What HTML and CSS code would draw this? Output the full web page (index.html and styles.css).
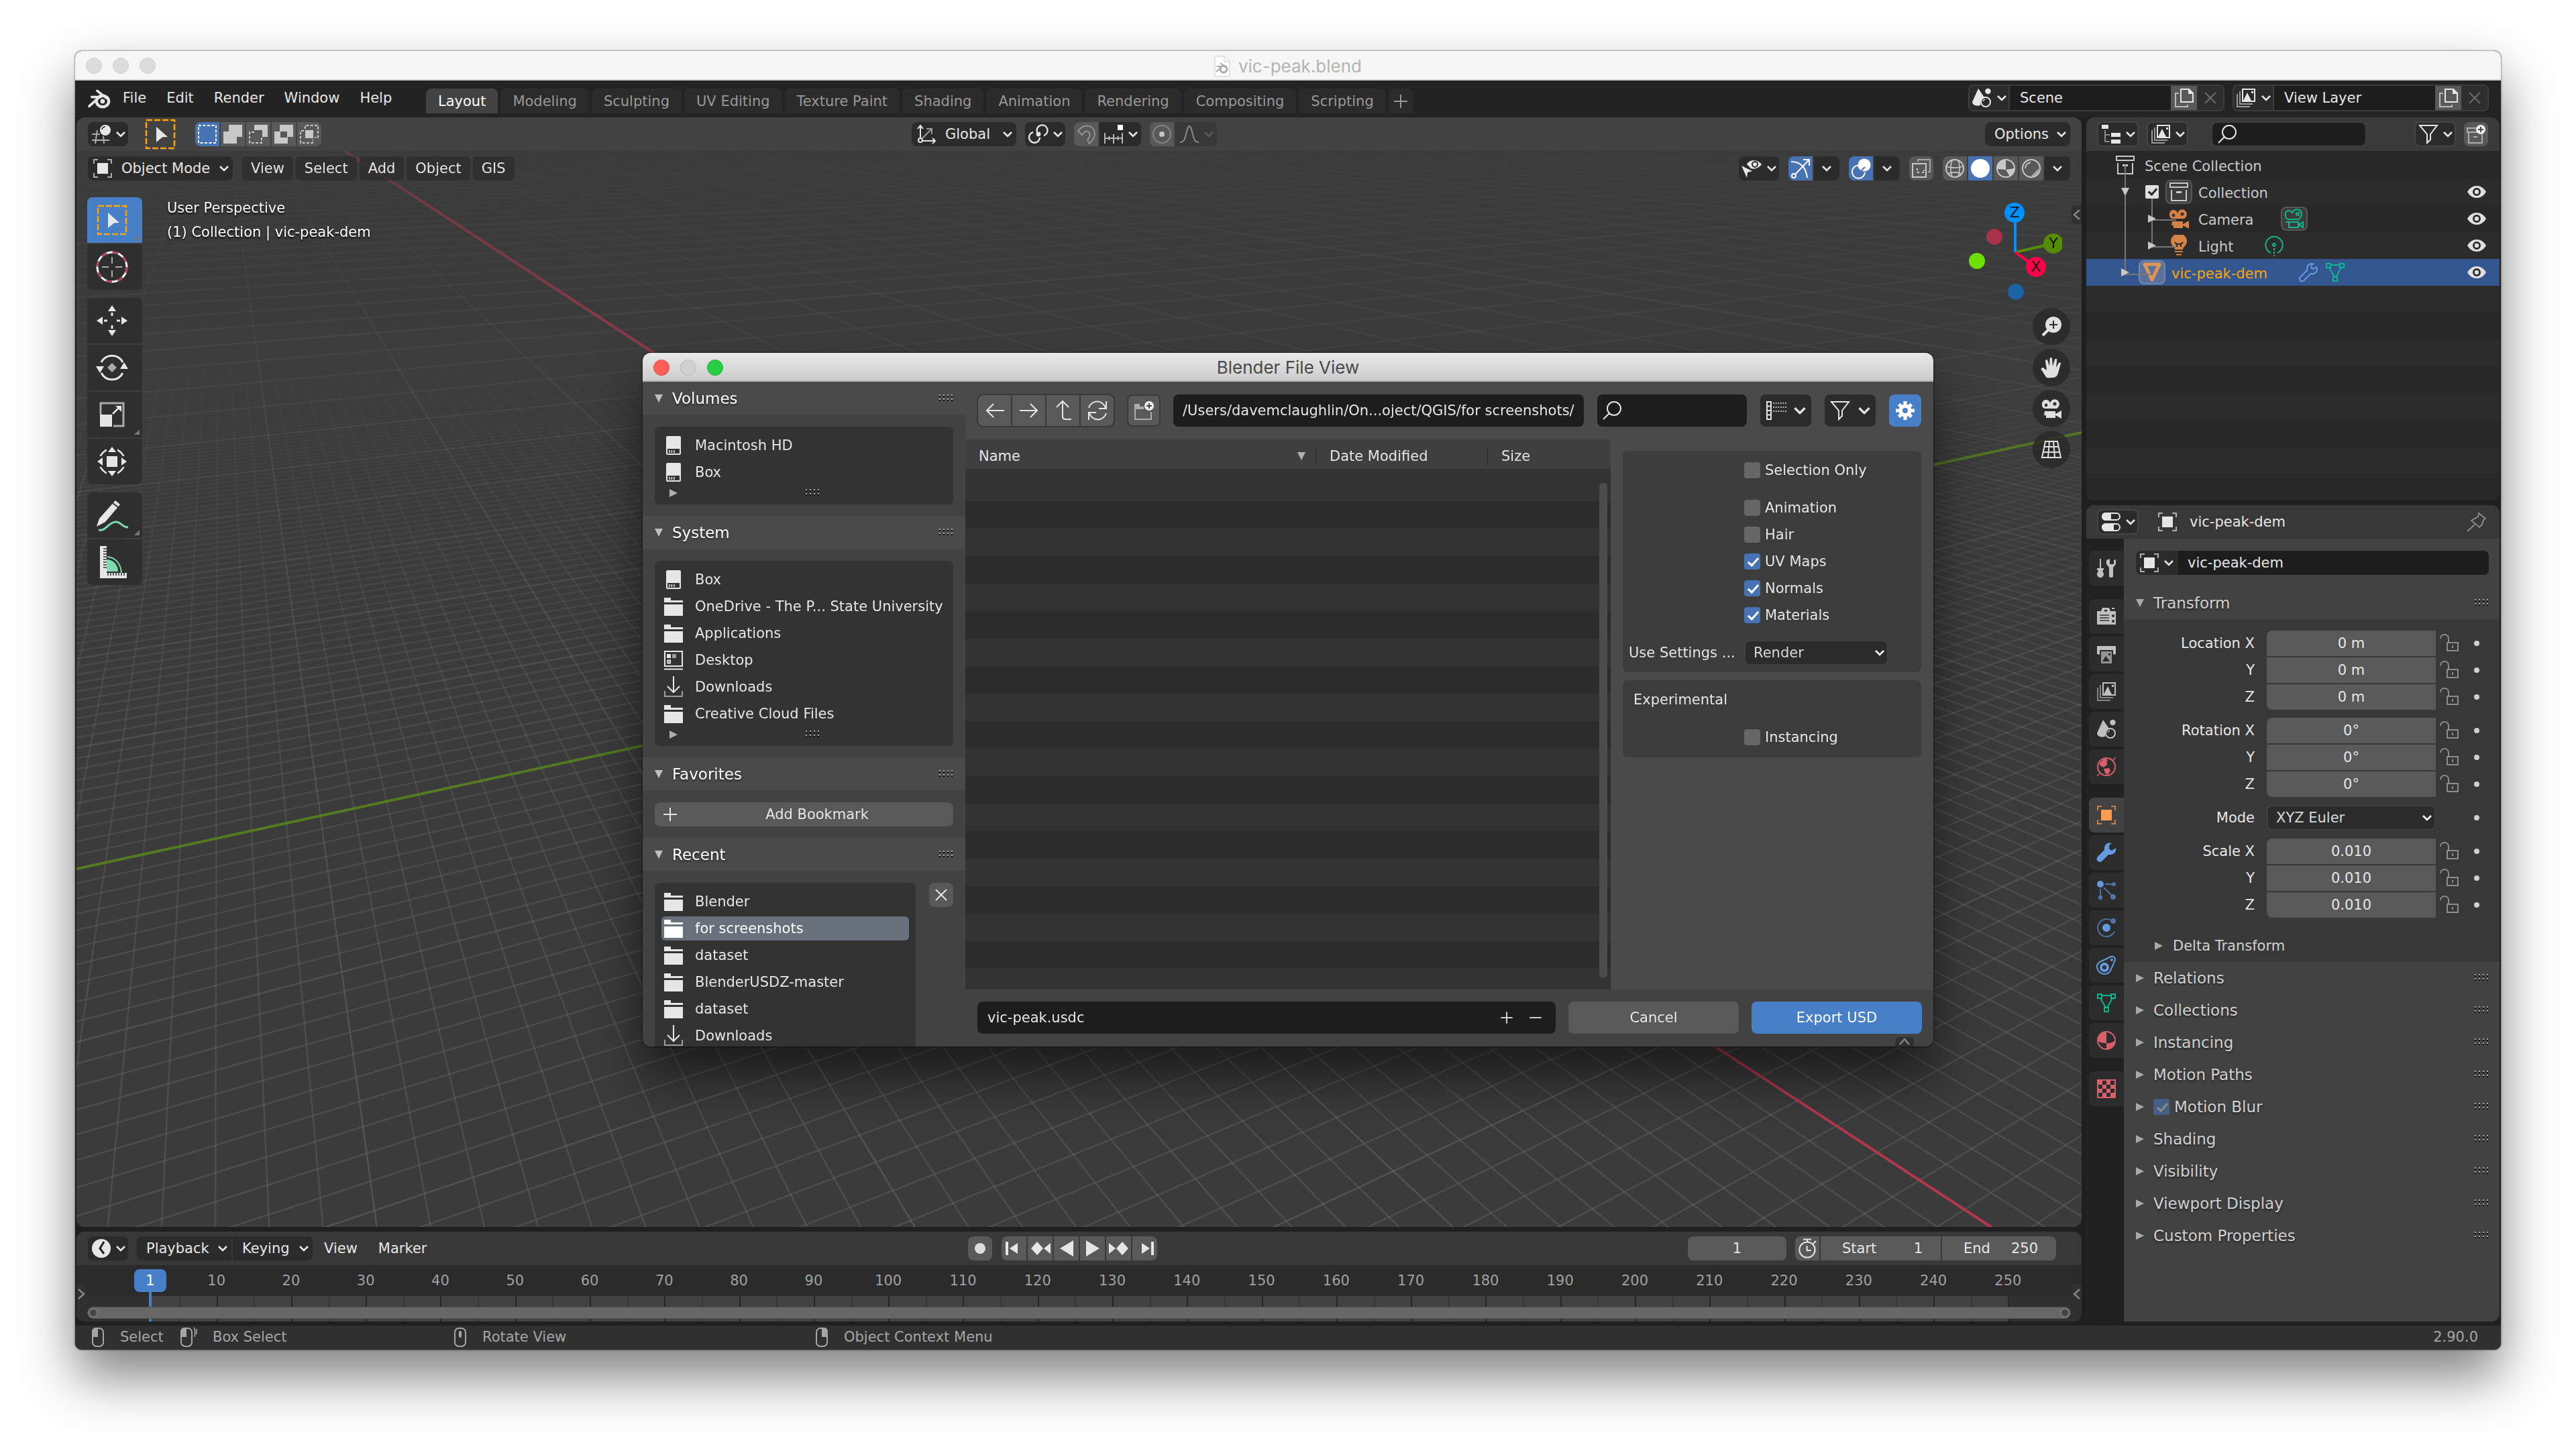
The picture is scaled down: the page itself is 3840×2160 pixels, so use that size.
FILE: index.html
```html
<!DOCTYPE html>
<html lang="en">
<head>
<meta charset="utf-8">
<title>vic-peak.blend</title>
<link rel="stylesheet" href="styles.css">
</head>
<body>
<svg class="defs" aria-hidden="true">
  <symbol id="down" viewBox="0 0 16 16"><path d="M2 5l6 6 6-6" fill="none" stroke="currentColor" stroke-width="2.6"/></symbol>
  <symbol id="left" viewBox="0 0 16 16"><path d="M12 1L4 8l8 7" fill="none" stroke="currentColor" stroke-width="2.4"/></symbol>
  <symbol id="tri-r" viewBox="0 0 16 16"><path d="M2 2l12 6-12 6z" fill="currentColor"/></symbol>
  <symbol id="tri-d" viewBox="0 0 16 16"><path d="M2 2h12L8 14z" fill="currentColor"/></symbol>
  <symbol id="grip" viewBox="0 0 22 12"><path d="M0 1h22M0 7h22" stroke="#000" stroke-width="2" stroke-dasharray="2 4" transform="translate(0 2)"/><path d="M0 1h22M0 7h22" stroke="#aaa" stroke-width="2" stroke-dasharray="2 4"/></symbol>
  <symbol id="plus" viewBox="0 0 16 16"><path d="M8 3v10M3 8h10" stroke="currentColor" fill="none"/></symbol>
  <symbol id="minus" viewBox="0 0 16 16"><path d="M3 8h10" stroke="currentColor"/></symbol>
  <symbol id="x" viewBox="0 0 16 16"><path d="M4 4l8 8M12 4l-8 8" stroke="currentColor" fill="none"/></symbol>
  <symbol id="blender" viewBox="0 0 16 16"><g fill="none" stroke="currentColor" stroke-linecap="round"><ellipse cx="10.2" cy="9.3" rx="4.1" ry="3.7" stroke-width="1.9"/><path d="M1.3 12.6L8.2 6.4M3 6.5h6M6.6 2.4l6.4 5" stroke-width="1.6"/></g><circle cx="10.2" cy="9.3" r="1.5" fill="currentColor"/></symbol>
  <symbol id="view3d" viewBox="0 0 16 16"><g fill="none" stroke="currentColor"><path d="M1 8h6M1 12.5h13M5 5L3.5 15M9.5 9.5L10 15" opacity=".7"/></g><circle cx="11" cy="5" r="4" fill="currentColor"/><path d="M8.5 4.500a2.500 2.500 0 0 1 2.500-2" fill="none" stroke="#2b2b2b" stroke-width=".8"/></symbol>
  <symbol id="tweak" viewBox="0 0 46 46"><rect x="2" y="2" width="42" height="42" fill="none" stroke="#ffa500" stroke-width="2.500" stroke-dasharray="9 3"/><path d="M17 12l17 15-8 .5L17 35z" fill="#e6e6e6"/></symbol>
  <symbol id="selset" viewBox="0 0 16 16"><rect x="1.500" y="1.500" width="13" height="13" fill="none" stroke="#fff" stroke-dasharray="2 1.250"/></symbol>
  <symbol id="seladd" viewBox="0 0 16 16"><path d="M5 1h10v9h-4v5H1V6h4z" fill="#c8c8c8"/></symbol>
  <symbol id="selsub" viewBox="0 0 16 16"><path d="M5 1h10v9h-4V5H5z" fill="#c8c8c8"/><path d="M5 6.500H1.500v8H10.500V10" fill="none" stroke="#c8c8c8" stroke-dasharray="2 1.200"/></symbol>
  <symbol id="selxor" viewBox="0 0 16 16"><path d="M5 1h10v9h-4v5H1V6h4zM5.500 6v4.500h5V6z" fill="#c8c8c8" fill-rule="evenodd"/></symbol>
  <symbol id="selint" viewBox="0 0 16 16"><path d="M5 5h6v6H5z" fill="#c8c8c8"/><path d="M5 4V1.500h9.500v9H12M4 5.500H1.500v9h9V12" fill="none" stroke="#c8c8c8" stroke-dasharray="2 1.200"/></symbol>
  <symbol id="orient" viewBox="0 0 16 16"><g fill="none" stroke="currentColor"><path d="M3.500 11V1.500M1.500 4l2-2.500L5.500 4M5 13h9.500M12.500 11l2 2-2 2"/><circle cx="3.500" cy="12.500" r="1.500"/><path d="M5 11l6.500-6.500M8 4h4v4" opacity=".6"/></g></symbol>
  <symbol id="pivot" viewBox="0 0 16 16"><g fill="none" stroke="currentColor" stroke-width="1.200"><path d="M7 6.500A4 4 0 1 1 12 9"/><path d="M4 6.500a4 4 0 1 0 5 4"/></g><circle cx="8" cy="8" r="1.700" fill="currentColor"/></symbol>
  <symbol id="magnet" viewBox="0 0 16 16"><path d="M2 6c3-6 12-6 12.500 2 0 2-2 5-4 7l-1.500-2.500C11 10 11.500 8 10 6.500 8.500 5 7 6 5 8.500z" fill="none" stroke="currentColor"/></symbol>
  <symbol id="snapinc" viewBox="0 0 16 16"><path d="M1.500 7v8M14.500 7v8M8 8v7M1 11h14M4.700 9.500v3M11.300 9.500v3" stroke="currentColor" opacity=".75"/><path d="M11 1h4v4h-4z" fill="#fff"/></symbol>
  <symbol id="prop" viewBox="0 0 16 16"><circle cx="8" cy="8" r="6.500" fill="none" stroke="currentColor" opacity=".4"/><circle cx="8" cy="8" r="2" fill="currentColor"/></symbol>
  <symbol id="falloff" viewBox="0 0 16 16"><path d="M1 14c3 0 3.500-2 4.500-6S7 2 8 2s1.500 2 2.500 6 1.500 6 4.500 6" fill="none" stroke="currentColor"/></symbol>
  <symbol id="object" viewBox="0 0 16 16"><path d="M4 4h8v8H4z" fill="currentColor"/><path d="M1.500 4.500v-3h3M11.500 1.500h3v3M14.500 11.500v3h-3M4.500 14.500h-3v-3" fill="none" stroke="currentColor" opacity=".7"/></symbol>
  <symbol id="vis" viewBox="0 0 16 16"><path d="M4 5c2-4 8-4 11 0-3 4-8 4-9 2z" fill="currentColor"/><circle cx="10" cy="5" r="2" fill="none" stroke="#2b2b2b"/><path d="M0 6l8 4-3.500 1L4 15z" fill="currentColor"/></symbol>
  <symbol id="gizmo" viewBox="0 0 16 16"><g fill="none" stroke="currentColor"><path d="M1 3c7 0 11 4 12 12M4 12.500L14 2M10 1.500h4.500V6"/><circle cx="3" cy="13.500" r="1.500"/></g></symbol>
  <symbol id="overlay" viewBox="0 0 16 16"><circle cx="10.500" cy="5.500" r="4.800" fill="currentColor"/><path d="M6 5.800a4.800 4.800 0 1 0 5 5.200" fill="none" stroke="currentColor"/><path d="M7 11l4-4" stroke="#4772b3"/></symbol>
  <symbol id="xray" viewBox="0 0 16 16"><g fill="none" stroke="currentColor"><path d="M1.500 4.500h10v10h-10z"/><path d="M5.500 3V1.500h9v9H13" opacity=".7"/><path d="M5 11h2M8.500 11H10V9M5 8v3" stroke-dasharray="1.500 1"/></g></symbol>
  <symbol id="wire" viewBox="0 0 16 16"><g fill="none" stroke="currentColor"><circle cx="8" cy="8" r="6.500"/><path d="M1.500 6.500c4 1.300 9 1.300 13 0M3 12c3-1.300 7-1.300 10 0M6 2c-1.500 4-1.500 8 0 12M10.500 2c1.500 4 1.500 8 0 12" stroke-width=".8"/></g></symbol>
  <symbol id="solid" viewBox="0 0 16 16"><circle cx="8" cy="8" r="7" fill="#fff"/></symbol>
  <symbol id="matprev" viewBox="0 0 16 16"><circle cx="8" cy="8" r="6.500" fill="none" stroke="currentColor"/><path d="M8 1.500V9L1.800 8.500A6.500 6.500 0 0 1 8 1.500zM8 9l6-1v3l-3 3z" fill="currentColor"/></symbol>
  <symbol id="rendered" viewBox="0 0 16 16"><circle cx="8" cy="8" r="6.500" fill="none" stroke="currentColor"/><path d="M3.500 8a5 5 0 0 1 4-4.500" fill="none" stroke="currentColor"/><path d="M8 13.500L13.500 8v4l-3 2.500z" fill="currentColor" opacity=".7"/></symbol>
  <symbol id="scene" viewBox="0 0 16 16"><path d="M5.500 1L1 11c0 2 3 3.500 6 2.500 0-3 1-5 3-6z" fill="currentColor"/><circle cx="12.700" cy="3" r="2.100" fill="currentColor"/><circle cx="11" cy="11" r="3.500" fill="none" stroke="currentColor"/><path d="M9 10.500a2 2 0 0 1 1.500-1.300" fill="none" stroke="currentColor" stroke-width=".7"/></symbol>
  <symbol id="copy" viewBox="0 0 16 16"><g fill="none" stroke="currentColor"><path d="M5.500 1.500h6L14.500 4.500V11h-9z"/><path d="M4 4.500H1.500v10h9V13" opacity=".7"/></g><path d="M11 1l4 4h-4z" fill="currentColor"/></symbol>
  <symbol id="layers" viewBox="0 0 16 16"><g fill="none" stroke="currentColor"><path d="M5.500 1.500h9v9h-9z"/><path d="M3.500 3v9.500H13M1.500 5v9.500H11" opacity=".6"/></g><path d="M6 10l3-6 3 6zM12 3h1.500v1.500H12z" fill="currentColor"/></symbol>
  <symbol id="outliner" viewBox="0 0 16 16"><path d="M1 1h5v3H1zM8 7h7v3H8zM8 12h7v3H8z" fill="currentColor"/><path d="M3.500 5v8.500H7M3.500 8.500H7" fill="none" stroke="currentColor" opacity=".5"/></symbol>
  <symbol id="search" viewBox="0 0 16 16"><g fill="none" stroke="currentColor"><circle cx="9.500" cy="6.500" r="5"/><path d="M6 10l-4.500 4.500"/></g></symbol>
  <symbol id="filter" viewBox="0 0 16 16"><path d="M1.500 1.500h13L9.500 8v4L7 14.500V8z" fill="none" stroke="currentColor"/></symbol>
  <symbol id="newcol" viewBox="0 0 16 16"><g fill="none" stroke="currentColor" opacity=".6"><path d="M9 3.500H1.500v3H11M2.500 7v7.500h10V8M6 10h3"/></g><circle cx="11.500" cy="4.500" r="3.500" fill="#f0f0f0"/><path d="M11.500 2.500v4M9.500 4.500h4" stroke="#444"/></symbol>
  <symbol id="archive" viewBox="0 0 16 16"><g fill="none" stroke="currentColor"><path d="M1.500 1.500h13v3h-13zM2.500 6.500v8h11v-8"/></g><path d="M6 7.500h4v1.500H6z" fill="currentColor"/></symbol>
  <symbol id="eye" viewBox="0 0 16 16"><path d="M1 8c3.500-6 10.500-6 14 0-3.500 6-10.500 6-14 0z" fill="currentColor"/><circle cx="8" cy="8" r="2.300" fill="none" stroke="#282828" stroke-width="1.400"/></symbol>
  <symbol id="camera" viewBox="0 0 16 16"><path d="M1 5a3 3 0 0 1 6-1 3.500 3.500 0 1 1 6 3l-1 1H3a3 3 0 0 1-2-3zM3 10h8v5H4v-2H2.500zM11 12l4.500-2.500v6L11 13z" fill="currentColor"/><g fill="#333"><circle cx="4" cy="5.500" r="1.200"/><circle cx="10.500" cy="4.500" r="1.300"/></g></symbol>
  <symbol id="camera-o" viewBox="0 0 16 16"><g fill="none" stroke="currentColor"><path d="M1.500 5a2.500 2.500 0 0 1 5-1 3.500 3.500 0 1 1 6 3l-1 1.500H3.500a3 3 0 0 1-2-3.500zM4 10.500h7v4H4zM11.500 12.500l3-2v4zM1.500 10.500H4"/><circle cx="10.500" cy="4.500" r="1" /></g></symbol>
  <symbol id="light" viewBox="0 0 16 16"><path d="M5 11c0-2-3-3-3-6a6 6 0 0 1 12 0c0 3-3 4-3 6z" fill="currentColor"/><path d="M5 12.500h6M6 14.700h4" stroke="currentColor"/><path d="M5 5.500c1 2 5 2 6 0M6.500 9V7M9.500 9V7" fill="none" stroke="#2b2b2b"/></symbol>
  <symbol id="light-o" viewBox="0 0 16 16"><g fill="none" stroke="currentColor"><path d="M5.500 13.500a6.300 6.300 0 1 1 5 0" /><circle cx="8" cy="7.500" r="1"/><path d="M8 10v1.500M8 12.500V14M8 15v1"/></g></symbol>
  <symbol id="tri-mesh" viewBox="0 0 16 16"><path d="M2.500 2h11L8 13.500z" fill="none" stroke="#e0935a" stroke-width="2.600" stroke-linejoin="round"/></symbol>
  <symbol id="wrench" viewBox="0 0 16 16"><path d="M13.700 4.200l-2.200 1.300-1.300-.8.200-2.300C11 2 11.300 1.800 11.600 1.700 9.500 1 7 2.500 7 5c0 .5.100 1 .2 1.400L2 11.500c-.8.800-.8 2 0 2.700s2 .7 2.700-.1L9.800 8.900c2.700.9 5-1.200 4.800-4z" fill="none" stroke="currentColor"/></symbol>
  <symbol id="wrench-f" viewBox="0 0 16 16"><path d="M15 4.500l-3 2-2-1.300.2-3L12 1C9 0 6 2 6.500 6L1.500 11c-1 1.200-.8 2.500 0 3.300s2.200 1 3.300-.1L9.500 9.500C13 10 15.500 8 15 4.500z" fill="currentColor"/></symbol>
  <symbol id="mesh" viewBox="0 0 16 16"><g fill="none" stroke="currentColor"><path d="M1.500 1.500h3v3h-3zM11.500 1.500h3v3h-3zM6.500 11.500h3v3h-3zM4.500 2.500h7M3.500 4.500l4 7M12.500 4.500l-4 7"/></g></symbol>
  <symbol id="props" viewBox="0 0 16 16"><g fill="none" stroke="currentColor"><rect x="1.500" y="1.500" width="13" height="5" rx="2.500"/><rect x="1.500" y="9.500" width="13" height="5" rx="2.500"/></g><path d="M4 1h4v6H4a3 3 0 0 1 0-6zM4 9h6v6H4a3 3 0 0 1 0-6z" fill="currentColor"/></symbol>
  <symbol id="pin" viewBox="0 0 16 16"><path d="M9.500 1.500l5 4-1.500 1-1 3.500-2 2L4 7l5-3zM6.500 10L1 15" fill="none" stroke="currentColor"/></symbol>
  <symbol id="tool" viewBox="0 0 16 16"><path d="M3.500 1v8" stroke="currentColor"/><path d="M1 8h5v1L5 10l1 2c0 4-5 4-5 0l1-2-1-1z" fill="currentColor"/><path d="M8 2v3l2 2.500V14c0 1.300 3 1.300 3 0V7.500L15 5V1.500l-1.500.5v3h-3V1z" fill="currentColor"/></symbol>
  <symbol id="render" viewBox="0 0 16 16"><path d="M1 4h3l1-2.500h5L11 4h4v10H1zM12 1.500h2v1h-2z" fill="currentColor"/><path d="M3 7h7M3 9h7M3 11h7" stroke="#555" stroke-width=".9"/><circle cx="13" cy="7.500" r="1" fill="#2b2b2b"/><circle cx="13" cy="11.500" r="1" fill="#2b2b2b"/><path d="M6.500 3h2v1.300h-2z" fill="#2b2b2b"/></symbol>
  <symbol id="output" viewBox="0 0 16 16"><path d="M1 2h14v6l-2 .5V5H3v3.500L1 8z" fill="currentColor"/><path d="M4 6h8v9H4z" fill="currentColor" opacity=".7"/><path d="M5 13.500l2.500-4 3 4zM9.500 7.500H11V9H9.500z" fill="#2b2b2b"/></symbol>
  <symbol id="world" viewBox="0 0 16 16"><g fill="none" stroke="currentColor"><circle cx="8" cy="8" r="6.500"/><path d="M12.500 3.500L15 1M3.500 12.500L1 15" opacity=".7"/></g><path d="M3 5l4-3.500 2 1.500-1 2 1 1-3 2.500L3 7zM6 9.500l4-.5 1 2-2 3-2-1.500z" fill="currentColor"/></symbol>
  <symbol id="particles" viewBox="0 0 16 16"><circle cx="3.500" cy="3.500" r="2.500" fill="currentColor"/><g opacity=".65"><circle cx="13.500" cy="3.500" r="1.500" fill="currentColor"/><circle cx="13" cy="13" r="2" fill="currentColor"/><circle cx="3.500" cy="13.500" r="1.600" fill="currentColor"/><path d="M7 3.500h5M3.500 7v5M6 6l6 6" stroke="currentColor"/></g></symbol>
  <symbol id="physics" viewBox="0 0 16 16"><circle cx="8" cy="8" r="3" fill="currentColor"/><g opacity=".65"><path d="M11 2.200a6.500 6.500 0 1 0 3 8.500" fill="none" stroke="currentColor"/><circle cx="13" cy="3" r="2" fill="currentColor"/></g></symbol>
  <symbol id="constraint" viewBox="0 0 16 16"><g fill="none" stroke="currentColor"><path d="M3 5.500L11.500 1.500c2-.5 3.500 1 2.800 3L11 12c-2 3.500-7 3-9 0s-1-5 1-6.500z"/><circle cx="6.500" cy="9.500" r="2.500" stroke-width="2"/></g><circle cx="12" cy="4" r="1" fill="currentColor"/></symbol>
  <symbol id="material" viewBox="0 0 16 16"><circle cx="8" cy="8" r="6.500" fill="none" stroke="currentColor"/><path d="M8 1.500V10c-3 0-5-.5-6.500-2A6.500 6.500 0 0 1 8 1.500zM8 10c3 0 5-.5 6.500-2A6.500 6.500 0 0 1 8 14.500z" fill="currentColor"/></symbol>
  <symbol id="texture" viewBox="0 0 16 16"><path d="M1.500 1.500h13v13h-13z" fill="none" stroke="currentColor"/><path d="M2 2h3v3H2zM8 2h3v3H8zM5 5h3v3H5zM11 5h3v3h-3zM2 8h3v3H2zM8 8h3v3H8zM5 11h3v3H5zM11 11h3v3h-3z" fill="currentColor"/></symbol>
  <symbol id="lock" viewBox="0 0 16 16"><g fill="none" stroke="currentColor"><path d="M6.500 7.500h8v6h-8zM7.500 7V4.500c0-4-6-4-6 0"/></g><path d="M10 9.500h1v2h-1z" fill="currentColor"/></symbol>
  <symbol id="drive" viewBox="0 0 16 16"><path d="M3.500 1h9a1 1 0 0 1 1 1v12a1 1 0 0 1-1 1h-9a1 1 0 0 1-1-1V2a1 1 0 0 1 1-1z" fill="currentColor"/><path d="M3.500 10.500h9v3.500h-9z" fill="#333"/><path d="M5 11.500v2M6.700 11.500v2M8.500 11.500v2" stroke="currentColor" stroke-width=".8"/></symbol>
  <symbol id="folder" viewBox="0 0 16 16"><path d="M1 1.500h5v2h9V5H1zM1 6.500h14v8.500H1z" fill="currentColor"/></symbol>
  <symbol id="desktop" viewBox="0 0 16 16"><g fill="none" stroke="currentColor"><path d="M1.500 1.500h13v11h-13zM1 14.800h14M3.700 8.200h1.800v2H3.700z"/></g><path d="M3 3.500h3v3H3z" fill="currentColor"/><path d="M7 3.500h3v3H7z" fill="currentColor" opacity=".6"/></symbol>
  <symbol id="download" viewBox="0 0 16 16"><path d="M8 0v12M3.500 7.500L8 12l4.500-4.500" fill="none" stroke="currentColor"/><path d="M1.500 11v4h13v-4" fill="none" stroke="currentColor" opacity=".6"/></symbol>
  <symbol id="back" viewBox="0 0 16 16"><path d="M15 8H2M7 3L2 8l5 5" fill="none" stroke="currentColor"/></symbol>
  <symbol id="fwd" viewBox="0 0 16 16"><path d="M1 8h13M9 3l5 5-5 5" fill="none" stroke="currentColor"/></symbol>
  <symbol id="up" viewBox="0 0 16 16"><path d="M7.500 1v11c0 2 .5 2.500 2.500 2.500h4M3 5.500L7.500 1 12 5.500" fill="none" stroke="currentColor"/></symbol>
  <symbol id="refresh" viewBox="0 0 16 16"><path d="M1.500 6A6.500 6.500 0 0 1 14 6M14.500 1v5.500H9M14.500 10A6.500 6.500 0 0 1 2 10M1.500 15V9.500H7" fill="none" stroke="currentColor"/></symbol>
  <symbol id="newfolder" viewBox="0 0 16 16"><path d="M1 3h4v2h3v2H1z" fill="currentColor" opacity=".6"/><path d="M1.500 7v7.500h12V9" fill="none" stroke="currentColor" opacity=".6"/><circle cx="12" cy="4.500" r="3.500" fill="#f0f0f0"/><path d="M12 2.500v4M10 4.500h4" stroke="#444"/></symbol>
  <symbol id="list" viewBox="0 0 16 16"><path d="M1.500 1.500h3v13h-3zM1.500 4.700h3M1.500 8h3M1.500 11.300h3" fill="none" stroke="currentColor"/><path d="M6 2.500h10M6 5.500h10M6 8.500h10" stroke="currentColor" stroke-width=".8" stroke-dasharray="1 .8"/></symbol>
  <symbol id="gear" viewBox="0 0 16 16"><g stroke="#fff" stroke-width="2.600"><path d="M8 1v14M1 8h14M3.300 3.300l9.400 9.400M12.700 3.300l-9.400 9.400"/></g><circle cx="8" cy="8" r="4.800" fill="#fff"/><circle cx="8" cy="8" r="2" fill="#4780c8"/></symbol>
  <symbol id="clock" viewBox="0 0 16 16"><circle cx="8" cy="8" r="7" fill="currentColor"/><path d="M10 3L7 8l3 4" fill="none" stroke="#222" stroke-width="1.500"/></symbol>
  <symbol id="stopwatch" viewBox="0 0 16 16"><g fill="none" stroke="currentColor"><circle cx="8" cy="9" r="5.800"/><path d="M8 3V1M5 1.200h6M12.500 4.500l2-2M7.800 6v3.500h3"/></g></symbol>
  <symbol id="mouse-l" viewBox="0 0 16 16"><rect x="4" y="1.500" width="8" height="13.500" rx="3" fill="none" stroke="currentColor"/><path d="M8 1H7a3 3 0 0 0-3.500 3v4H8z" fill="currentColor"/></symbol>
  <symbol id="mouse-drag" viewBox="0 0 16 16"><rect x="1" y="1.500" width="8" height="13.500" rx="3" fill="none" stroke="currentColor"/><path d="M5 1H4a3 3 0 0 0-3.500 3v4H5z" fill="currentColor"/><path d="M10.500 1c1 1 1 5 .500 7M12.500 2v4" fill="none" stroke="currentColor" stroke-width=".8"/></symbol>
  <symbol id="mouse-m" viewBox="0 0 16 16"><rect x="4" y="1.500" width="8" height="13.500" rx="3" fill="none" stroke="currentColor"/><rect x="7" y="3.500" width="2" height="5" rx="1" fill="currentColor"/></symbol>
  <symbol id="mouse-r" viewBox="0 0 16 16"><rect x="4" y="1.500" width="8" height="13.500" rx="3" fill="none" stroke="currentColor"/><path d="M8 1h1a3 3 0 0 1 3.500 3v4H8z" fill="currentColor"/></symbol>
  <symbol id="k-start" viewBox="0 0 16 16"><path d="M1.500 3h2v10h-2zM10.500 4v8L4.500 8z" fill="currentColor"/></symbol>
  <symbol id="k-prev" viewBox="0 0 16 16"><path d="M1 8l4.500-5L10 8l-4.500 5zM15.500 4v8l-5-4z" fill="currentColor"/></symbol>
  <symbol id="k-rev" viewBox="0 0 16 16"><path d="M13 2v12L3 8z" fill="currentColor"/></symbol>
  <symbol id="k-play" viewBox="0 0 16 16"><path d="M3 2v12l10-6z" fill="currentColor"/></symbol>
  <symbol id="k-next" viewBox="0 0 16 16"><path d="M6 8l4.500-5L15 8l-4.500 5zM.500 4v8l5-4z" fill="currentColor"/></symbol>
  <symbol id="k-end" viewBox="0 0 16 16"><path d="M12.500 3h2v10h-2zM5.500 4v8l6-4z" fill="currentColor"/></symbol>
  <symbol id="zoom" viewBox="0 0 16 16"><circle cx="9.500" cy="6.500" r="6" fill="currentColor"/><path d="M6 10l-4.500 4.500" stroke="currentColor" stroke-width="2"/><path d="M9.500 3.500v6M6.500 6.500h6" stroke="#2b2b2b"/></symbol>
  <symbol id="hand" viewBox="0 0 16 16"><path d="M4 15L.5 9.500C0 8 1.500 7.500 2.500 8.500L4.500 10 3.500 3c0-1.300 1.500-1.500 1.800 0L6.500 7l.3-5.500c0-1.300 1.700-1.300 1.700 0L9 7l1.500-5c.5-1 1.800-.8 1.600.5L11.500 8l2-3.500c.7-.8 1.700-.3 1.400.7L13 12c-.7 2.500-2 3.500-4.500 3.500S5 16 4 15z" fill="currentColor"/></symbol>
  <symbol id="persp" viewBox="0 0 16 16"><path d="M3.500 2h9l2.500 12H1zM2.500 6h11M1.700 10h12.600M6.500 2L5.500 14M9.500 2l1 12" fill="none" stroke="currentColor"/></symbol>
  <symbol id="t-cursor" viewBox="0 0 48 48"><circle cx="24" cy="24" r="22" fill="none" stroke="#fff" stroke-width="3"/><circle cx="24" cy="24" r="22" fill="none" stroke="#b04050" stroke-width="3" stroke-dasharray="8.640 8.640"/><path d="M24 9v10M24 29v10M9 24h10M29 24h10" stroke="#aaa" stroke-width="2"/></symbol>
  <symbol id="t-move" viewBox="0 0 48 48"><path d="M24 1l6 9H18zM24 47l6-9H18zM1 24l9-6v12zM47 24l-9-6v12z" fill="#e6e6e6"/><path d="M24 12v5M24 31v5M12 24h5M31 24h5" stroke="#e6e6e6" stroke-width="3"/></symbol>
  <symbol id="t-rotate" viewBox="0 0 48 48"><path d="M8 16a18 18 0 0 1 32 0M40 32a18 18 0 0 1-32 0" fill="none" stroke="#e6e6e6" stroke-width="3"/><path d="M0 22h12l-6 10zM36 26h12l-6-10z" fill="#e6e6e6"/><path d="M24 17l7 7-7 7-7-7z" fill="#aaa"/></symbol>
  <symbol id="t-scale" viewBox="0 0 48 48"><path d="M7 24V7h34v34H26" fill="none" stroke="#aaa" stroke-width="3"/><path d="M6 24h18v18H6z" fill="#e6e6e6"/><path d="M25 23l9-9" stroke="#e6e6e6" stroke-width="2.500"/><path d="M29 11h9v9z" fill="#e6e6e6"/></symbol>
  <symbol id="t-transform" viewBox="0 0 48 48"><circle cx="24" cy="24" r="19" fill="none" stroke="#e6e6e6" stroke-width="2.500"/><path d="M16 0h16v11H16zM16 37h16v11H16zM0 16h11v16H0zM37 16h11v16H37z" fill="#2f2f2f"/><path d="M24 2l6 8H18zM24 46l6-8H18zM2 24l8-6v12zM46 24l-8-6v12zM16 16h16v16H16z" fill="#e6e6e6"/></symbol>
  <symbol id="t-annotate" viewBox="0 0 48 48"><path d="M4 46c12 2 14-12 26-12 8 0 8 8 18 8" fill="none" stroke="#7ddbb0" stroke-width="3"/><path d="M29 2l7 6L14 34 1 41l4-12z" fill="#e6e6e6"/><path d="M25 6l8 6" stroke="#2f2f2f" stroke-width="2"/></symbol>
  <symbol id="t-measure" viewBox="0 0 48 48"><path d="M17 16c12 1 20 10 21 24" fill="none" stroke="#7ddbb0" stroke-width="2"/><path d="M16 20c10 0 17 8 17 18H16z" fill="#7ddbb0"/><path d="M6 0h10v40h30v8H6z" fill="#e6e6e6"/><path d="M11 4h5M11 8h5M11 12h5M11 16h5M11 20h5M11 24h5M11 28h5M11 32h5M18 40v4M22 40v4M26 40v4M30 40v4M34 40v4M38 40v4M42 40v4" stroke="#2f2f2f" stroke-width="1.500"/></symbol>
</svg>

<main class="window">
  <header class="titlebar">
    <span class="lights"><i></i><i></i><i></i></span>
    <h1 class="title"><svg class="doc" viewBox="0 0 24 32"><path d="M1 1h14l8 8v22H1z" fill="#fff" stroke="#ccc"/><path d="M15 1v8h8" fill="none" stroke="#ccc"/><g fill="none" stroke="#aaa" stroke-width="3"><circle cx="14" cy="20" r="5"/><path d="M3 24l8-7M4 16h8M9 11l8 6" stroke-width="2"/></g></svg>vic-peak.blend</h1>
  </header>

  <nav class="topbar">
    <button class="bare logo" aria-label="Blender"><svg class="ic36"><use href="#blender"/></svg></button>
    <div class="menus"><button>File</button><button>Edit</button><button>Render</button><button>Window</button><button>Help</button></div>
    <div class="tabs"><button class="on">Layout</button><button>Modeling</button><button>Sculpting</button><button>UV Editing</button><button>Texture Paint</button><button>Shading</button><button>Animation</button><button>Rendering</button><button>Compositing</button><button>Scripting</button><button class="add" aria-label="Add workspace"><svg class="ic"><use href="#plus"/></svg></button></div>
    <div class="idblock scene">
      <button class="dd" aria-label="Browse scene"><svg class="ic"><use href="#scene"/></svg><svg class="chev"><use href="#down"/></svg></button>
      <input type="text" value="Scene" aria-label="Scene name">
      <button class="lit" aria-label="New scene"><svg class="ic"><use href="#copy"/></svg></button>
      <button class="off" aria-label="Delete scene"><svg class="ic"><use href="#x"/></svg></button>
    </div>
    <div class="idblock layer">
      <button class="dd" aria-label="Browse layer"><svg class="ic"><use href="#layers"/></svg><svg class="chev"><use href="#down"/></svg></button>
      <input type="text" value="View Layer" aria-label="View layer name">
      <button class="lit" aria-label="New layer"><svg class="ic"><use href="#copy"/></svg></button>
      <button class="off" aria-label="Delete layer"><svg class="ic"><use href="#x"/></svg></button>
    </div>
  </nav>

  <div class="workspace">
    <div class="left-col">
      <section class="area view3d">
        <div class="toolhead">
          <div class="side">
            <button class="dark dd" aria-label="Editor type"><svg class="ic"><use href="#view3d"/></svg><svg class="chev"><use href="#down"/></svg></button>
            <button class="bare tweak" aria-label="Active tool"><svg class="ic46"><use href="#tweak"/></svg></button>
            <div class="group"><button class="blue" aria-label="Set"><svg class="ic"><use href="#selset"/></svg></button><button aria-label="Extend"><svg class="ic"><use href="#seladd"/></svg></button><button aria-label="Subtract"><svg class="ic"><use href="#selsub"/></svg></button><button aria-label="Invert"><svg class="ic"><use href="#selxor"/></svg></button><button aria-label="Intersect"><svg class="ic"><use href="#selint"/></svg></button></div>
          </div>
          <div class="mid">
            <button class="dark label wide"><svg class="ic"><use href="#orient"/></svg><span>Global</span><svg class="chev"><use href="#down"/></svg></button>
            <button class="dark dd" aria-label="Pivot"><svg class="ic"><use href="#pivot"/></svg><svg class="chev"><use href="#down"/></svg></button>
            <div class="group"><button class="dim" aria-label="Snap"><svg class="ic"><use href="#magnet"/></svg></button><button class="dark dd" aria-label="Snap to"><svg class="ic"><use href="#snapinc"/></svg><svg class="chev"><use href="#down"/></svg></button></div>
            <div class="group"><button aria-label="Proportional editing"><svg class="ic"><use href="#prop"/></svg></button><button class="faded dd" aria-label="Falloff"><svg class="ic"><use href="#falloff"/></svg><svg class="chev"><use href="#down"/></svg></button></div>
          </div>
          <div class="side end"><button class="dark textdrop options">Options<svg class="chev"><use href="#down"/></svg></button></div>
        </div>
        <div class="viewport">
          <canvas id="floor"></canvas>
          <div class="viewhead">
            <button class="dark label mode"><svg class="ic"><use href="#object"/></svg><span>Object Mode</span><svg class="chev"><use href="#down"/></svg></button>
            <div class="vmenus"><button>View</button><button>Select</button><button>Add</button><button>Object</button><button>GIS</button></div>
            <div class="vright">
              <button class="dark dd" aria-label="Visibility"><svg class="ic"><use href="#vis"/></svg><svg class="chev"><use href="#down"/></svg></button>
              <div class="group"><button class="blue" aria-label="Gizmos"><svg class="ic"><use href="#gizmo"/></svg></button><button class="dark" aria-label="Gizmo options"><svg class="chev"><use href="#down"/></svg></button></div>
              <div class="group"><button class="blue" aria-label="Overlays"><svg class="ic"><use href="#overlay"/></svg></button><button class="dark" aria-label="Overlay options"><svg class="chev"><use href="#down"/></svg></button></div>
              <div class="group"><button aria-label="X-ray"><svg class="ic"><use href="#xray"/></svg></button></div>
              <div class="group"><button aria-label="Wireframe"><svg class="ic"><use href="#wire"/></svg></button><button class="blue" aria-label="Solid"><svg class="ic"><use href="#solid"/></svg></button><button aria-label="Material"><svg class="ic"><use href="#matprev"/></svg></button><button aria-label="Rendered"><svg class="ic"><use href="#rendered"/></svg></button><button class="dark" aria-label="Shading options"><svg class="chev"><use href="#down"/></svg></button></div>
            </div>
          </div>
          <div class="viewbody">
            <div class="tools">
              <div class="toolgroup"><button class="on more" aria-label="Select box"><svg class="ic46"><use href="#tweak"/></svg></button><button aria-label="Cursor"><svg class="ic48"><use href="#t-cursor"/></svg></button></div>
              <div class="toolgroup"><button aria-label="Move"><svg class="ic48"><use href="#t-move"/></svg></button><button aria-label="Rotate"><svg class="ic48"><use href="#t-rotate"/></svg></button><button class="more" aria-label="Scale"><svg class="ic48"><use href="#t-scale"/></svg></button><button aria-label="Transform"><svg class="ic48"><use href="#t-transform"/></svg></button></div>
              <div class="toolgroup"><button class="more" aria-label="Annotate"><svg class="ic48"><use href="#t-annotate"/></svg></button><button aria-label="Measure"><svg class="ic48"><use href="#t-measure"/></svg></button></div>
            </div>
            <p class="info">User Perspective<br>(1) Collection | vic-peak-dem</p>
            <div class="nav">
              <svg class="axes" viewBox="0 0 140 155">
                <circle cx="39" cy="54" r="12" fill="#a83248"/><circle cx="71" cy="136" r="12" fill="#1c63a4"/>
                <path d="M70 77L127 64" stroke="#568c00" stroke-width="4"/><circle cx="127" cy="64" r="15" fill="#568c00"/>
                <path d="M70 77V18" stroke="#0090ff" stroke-width="4"/><circle cx="69" cy="18" r="15" fill="#0090ff"/>
                <path d="M70 77L101 99" stroke="#ff0049" stroke-width="4"/><circle cx="101" cy="99" r="15" fill="#ff0049"/>
                <circle cx="13" cy="90" r="12" fill="#6ee000"/>
                <g class="axis-name"><text x="69" y="25">Z</text><text x="127" y="71">Y</text><text x="101" y="106">X</text></g>
              </svg>
              <button aria-label="Zoom"><svg class="ic"><use href="#zoom"/></svg></button><button aria-label="Pan"><svg class="ic"><use href="#hand"/></svg></button><button aria-label="Camera view"><svg class="ic"><use href="#camera"/></svg></button><button aria-label="Perspective"><svg class="ic"><use href="#persp"/></svg></button>
            </div>
          </div>
          <button class="flap view-flap" aria-label="Show sidebar"><svg class="ic16"><use href="#left"/></svg></button>
        </div>
      </section>

      <section class="area timeline">
        <div class="timehead">
          <button class="dark dd" aria-label="Editor type"><svg class="ic"><use href="#clock"/></svg><svg class="chev"><use href="#down"/></svg></button>
          <div class="group outlined"><button class="dark textdrop playback">Playback<svg class="chev"><use href="#down"/></svg></button><button class="dark textdrop keying">Keying<svg class="chev"><use href="#down"/></svg></button></div>
          <button class="bare tv">View</button><button class="bare tm">Marker</button>
          <div class="transport">
            <div class="group"><button aria-label="Auto keying"><i class="rec"></i></button></div>
            <div class="group keys"><button aria-label="Jump to start"><svg class="ic"><use href="#k-start"/></svg></button><button aria-label="Previous keyframe"><svg class="ic"><use href="#k-prev"/></svg></button><button aria-label="Play reverse"><svg class="ic"><use href="#k-rev"/></svg></button><button aria-label="Play"><svg class="ic"><use href="#k-play"/></svg></button><button aria-label="Next keyframe"><svg class="ic"><use href="#k-next"/></svg></button><button aria-label="Jump to end"><svg class="ic"><use href="#k-end"/></svg></button></div>
          </div>
          <input class="frame" type="text" value="1" aria-label="Current frame">
          <div class="range"><button aria-label="Preview range"><svg class="ic"><use href="#stopwatch"/></svg></button><label class="start">Start<input type="text" value="1"></label><label class="stop">End<input type="text" value="250"></label></div>
        </div>
        <div class="ruler"><span>10</span><span>20</span><span>30</span><span>40</span><span>50</span><span>60</span><span>70</span><span>80</span><span>90</span><span>100</span><span>110</span><span>120</span><span>130</span><span>140</span><span>150</span><span>160</span><span>170</span><span>180</span><span>190</span><span>200</span><span>210</span><span>220</span><span>230</span><span>240</span><span>250</span></div>
        <div class="track"><i></i><i></i><i></i><i></i><i></i><i></i><i></i><i></i><i></i><i></i><i></i><i></i><i></i><i></i><i></i><i></i><i></i><i></i><i></i><i></i><i></i><i></i><i></i><i></i><i></i></div>
        <div class="playhead">1</div>
        <div class="hscroll"><i></i><i></i></div>
        <button class="flap tl-flap" aria-label="Show channels"><svg class="ic16 flip"><use href="#left"/></svg></button>
        <button class="flap tr-flap" aria-label="Show sidebar"><svg class="ic16"><use href="#left"/></svg></button>
      </section>
    </div>

    <div class="right-col">
      <section class="area outliner">
        <div class="outhead">
          <button class="dark dd" aria-label="Editor type"><svg class="ic"><use href="#outliner"/></svg><svg class="chev"><use href="#down"/></svg></button>
          <button class="dark dd" aria-label="Display mode"><svg class="ic"><use href="#layers"/></svg><svg class="chev"><use href="#down"/></svg></button>
          <label class="find"><svg class="ic"><use href="#search"/></svg><input type="text" aria-label="Filter"></label>
          <button class="dark dd" aria-label="Filter options"><svg class="ic"><use href="#filter"/></svg><svg class="chev"><use href="#down"/></svg></button>
          <button class="newcol" aria-label="New collection"><svg class="ic"><use href="#newcol"/></svg></button>
        </div>
        <div class="tree">
          <ul>
            <li><span class="cell"><svg class="ic"><use href="#archive"/></svg></span><span class="name">Scene Collection</span></li>
            <li><span class="cell arrow"><svg class="ic16"><use href="#tri-d"/></svg></span><span class="cell"><input class="vis" type="checkbox" checked aria-label="Collection"></span><span class="cell boxed"><svg class="ic"><use href="#archive"/></svg></span><span class="name">Collection</span><button class="cell eye" aria-label="Hide"><svg class="ic"><use href="#eye"/></svg></button></li>
            <li class="child"><span class="cell arrow"><svg class="ic16"><use href="#tri-r"/></svg></span><span class="cell orange"><svg class="ic"><use href="#camera"/></svg></span><span class="name">Camera</span><span class="cell boxed green"><svg class="ic"><use href="#camera-o"/></svg></span><button class="cell eye" aria-label="Hide"><svg class="ic"><use href="#eye"/></svg></button></li>
            <li class="child"><span class="cell arrow"><svg class="ic16"><use href="#tri-r"/></svg></span><span class="cell orange"><svg class="ic"><use href="#light"/></svg></span><span class="name">Light</span><span class="cell green"><svg class="ic"><use href="#light-o"/></svg></span><button class="cell eye" aria-label="Hide"><svg class="ic"><use href="#eye"/></svg></button></li>
            <li class="sel"><span class="cell arrow"><svg class="ic16"><use href="#tri-r"/></svg></span><span class="cell boxed"><svg class="ic"><use href="#tri-mesh"/></svg></span><span class="name">vic-peak-dem</span><span class="cell sky"><svg class="ic"><use href="#wrench"/></svg></span><span class="cell green"><svg class="ic"><use href="#mesh"/></svg></span><button class="cell eye" aria-label="Hide"><svg class="ic"><use href="#eye"/></svg></button></li>
          </ul>
          <svg class="branches" viewBox="0 0 160 205"><path d="M58 20V183H98M98 70V142H134M98 102H134" fill="none" stroke="#777" stroke-width="2"/></svg>
        </div>
      </section>

      <section class="area props">
        <div class="prophead">
          <button class="dark dd" aria-label="Editor type"><svg class="ic"><use href="#props"/></svg><svg class="chev"><use href="#down"/></svg></button>
          <svg class="ic objic"><use href="#object"/></svg><span>vic-peak-dem</span>
          <button class="bare pin" aria-label="Pin"><svg class="ic"><use href="#pin"/></svg></button>
        </div>
        <div class="propbody">
          <nav class="ptabs">
            <button aria-label="Tool"><svg class="ic"><use href="#tool"/></svg></button>
            <button class="sep" aria-label="Render"><svg class="ic"><use href="#render"/></svg></button>
            <button aria-label="Output"><svg class="ic"><use href="#output"/></svg></button>
            <button aria-label="View layer"><svg class="ic"><use href="#layers"/></svg></button>
            <button aria-label="Scene"><svg class="ic"><use href="#scene"/></svg></button>
            <button class="red" aria-label="World"><svg class="ic"><use href="#world"/></svg></button>
            <button class="sep on" aria-label="Object"><svg class="ic"><use href="#object"/></svg></button>
            <button class="sky" aria-label="Modifiers"><svg class="ic"><use href="#wrench-f"/></svg></button>
            <button class="sky" aria-label="Particles"><svg class="ic"><use href="#particles"/></svg></button>
            <button class="sky" aria-label="Physics"><svg class="ic"><use href="#physics"/></svg></button>
            <button class="sky" aria-label="Constraints"><svg class="ic"><use href="#constraint"/></svg></button>
            <button class="green" aria-label="Mesh"><svg class="ic"><use href="#mesh"/></svg></button>
            <button class="red" aria-label="Material"><svg class="ic"><use href="#material"/></svg></button>
            <button class="sep red" aria-label="Texture"><svg class="ic"><use href="#texture"/></svg></button>
          </nav>
          <div class="panels">
            <div class="idname"><button class="dd" aria-label="Browse object"><svg class="ic"><use href="#object"/></svg><svg class="chev"><use href="#down"/></svg></button><input type="text" value="vic-peak-dem" aria-label="Object name"></div>
            <h2 class="panel"><svg class="ic16"><use href="#tri-d"/></svg>Transform<svg class="grip"><use href="#grip"/></svg></h2>
            <div class="transform">
              <div class="block">
                <label for="lx">Location X</label><input id="lx" type="text" value="0 m"><svg class="ic lk"><use href="#lock"/></svg><i class="dot"></i>
                <label for="ly">Y</label><input id="ly" type="text" value="0 m"><svg class="ic lk"><use href="#lock"/></svg><i class="dot"></i>
                <label for="lz">Z</label><input id="lz" type="text" value="0 m"><svg class="ic lk"><use href="#lock"/></svg><i class="dot"></i>
              </div>
              <div class="block">
                <label for="rx">Rotation X</label><input id="rx" type="text" value="0°"><svg class="ic lk"><use href="#lock"/></svg><i class="dot"></i>
                <label for="ry">Y</label><input id="ry" type="text" value="0°"><svg class="ic lk"><use href="#lock"/></svg><i class="dot"></i>
                <label for="rz">Z</label><input id="rz" type="text" value="0°"><svg class="ic lk"><use href="#lock"/></svg><i class="dot"></i>
              </div>
              <div class="block one">
                <label for="rm">Mode</label><span class="pick"><select id="rm"><option>XYZ Euler</option></select><svg class="chev"><use href="#down"/></svg></span><i></i><i class="dot"></i>
              </div>
              <div class="block">
                <label for="sx">Scale X</label><input id="sx" type="text" value="0.010"><svg class="ic lk"><use href="#lock"/></svg><i class="dot"></i>
                <label for="sy">Y</label><input id="sy" type="text" value="0.010"><svg class="ic lk"><use href="#lock"/></svg><i class="dot"></i>
                <label for="sz">Z</label><input id="sz" type="text" value="0.010"><svg class="ic lk"><use href="#lock"/></svg><i class="dot"></i>
              </div>
              <h3 class="delta"><svg class="ic16"><use href="#tri-r"/></svg>Delta Transform</h3>
            </div>
            <h2 class="panel"><svg class="ic16"><use href="#tri-r"/></svg>Relations<svg class="grip"><use href="#grip"/></svg></h2>
            <h2 class="panel"><svg class="ic16"><use href="#tri-r"/></svg>Collections<svg class="grip"><use href="#grip"/></svg></h2>
            <h2 class="panel"><svg class="ic16"><use href="#tri-r"/></svg>Instancing<svg class="grip"><use href="#grip"/></svg></h2>
            <h2 class="panel"><svg class="ic16"><use href="#tri-r"/></svg>Motion Paths<svg class="grip"><use href="#grip"/></svg></h2>
            <h2 class="panel"><svg class="ic16"><use href="#tri-r"/></svg><label class="check muted"><input type="checkbox" checked>Motion Blur</label><svg class="grip"><use href="#grip"/></svg></h2>
            <h2 class="panel"><svg class="ic16"><use href="#tri-r"/></svg>Shading<svg class="grip"><use href="#grip"/></svg></h2>
            <h2 class="panel"><svg class="ic16"><use href="#tri-r"/></svg>Visibility<svg class="grip"><use href="#grip"/></svg></h2>
            <h2 class="panel"><svg class="ic16"><use href="#tri-r"/></svg>Viewport Display<svg class="grip"><use href="#grip"/></svg></h2>
            <h2 class="panel"><svg class="ic16"><use href="#tri-r"/></svg>Custom Properties<svg class="grip"><use href="#grip"/></svg></h2>
          </div>
        </div>
      </section>
    </div>
  </div>

  <footer class="status">
    <span class="hint h1"><svg class="ic"><use href="#mouse-l"/></svg>Select</span>
    <span class="hint h2"><svg class="ic"><use href="#mouse-drag"/></svg>Box Select</span>
    <span class="hint h3"><svg class="ic"><use href="#mouse-m"/></svg>Rotate View</span>
    <span class="hint h4"><svg class="ic"><use href="#mouse-r"/></svg>Object Context Menu</span>
    <span class="version">2.90.0</span>
  </footer>

  <div class="modal">
    <section class="dialog" role="dialog" aria-label="Blender File View">
      <header class="dlg-title"><span class="lights"><i class="close"></i><i class="idle"></i><i class="zoom"></i></span><h1 class="title">Blender File View</h1></header>
      <div class="dlg-main">
        <aside class="places">
          <h2 class="phead"><svg class="ic16"><use href="#tri-d"/></svg>Volumes<svg class="grip"><use href="#grip"/></svg></h2>
          <div class="pbox">
            <a href="#"><svg class="ic"><use href="#drive"/></svg>Macintosh HD</a><a href="#"><svg class="ic"><use href="#drive"/></svg>Box</a>
            <div class="more-row"><svg class="ic16"><use href="#tri-r"/></svg><svg class="grip soft"><use href="#grip"/></svg></div>
          </div>
          <h2 class="phead"><svg class="ic16"><use href="#tri-d"/></svg>System<svg class="grip"><use href="#grip"/></svg></h2>
          <div class="pbox">
            <a href="#"><svg class="ic"><use href="#drive"/></svg>Box</a><a href="#"><svg class="ic"><use href="#folder"/></svg>OneDrive - The P... State University</a><a href="#"><svg class="ic"><use href="#folder"/></svg>Applications</a><a href="#"><svg class="ic"><use href="#desktop"/></svg>Desktop</a><a href="#"><svg class="ic"><use href="#download"/></svg>Downloads</a><a href="#"><svg class="ic"><use href="#folder"/></svg>Creative Cloud Files</a>
            <div class="more-row"><svg class="ic16"><use href="#tri-r"/></svg><svg class="grip soft"><use href="#grip"/></svg></div>
          </div>
          <h2 class="phead"><svg class="ic16"><use href="#tri-d"/></svg>Favorites<svg class="grip"><use href="#grip"/></svg></h2>
          <button class="bookmark"><svg class="ic"><use href="#plus"/></svg><span>Add Bookmark</span></button>
          <h2 class="phead"><svg class="ic16"><use href="#tri-d"/></svg>Recent<svg class="grip"><use href="#grip"/></svg></h2>
          <div class="recent">
            <div class="pbox"><a href="#"><svg class="ic"><use href="#folder"/></svg>Blender</a><a href="#" class="on"><svg class="ic"><use href="#folder"/></svg>for screenshots</a><a href="#"><svg class="ic"><use href="#folder"/></svg>dataset</a><a href="#"><svg class="ic"><use href="#folder"/></svg>BlenderUSDZ-master</a><a href="#"><svg class="ic"><use href="#folder"/></svg>dataset</a><a href="#"><svg class="ic"><use href="#download"/></svg>Downloads</a></div>
            <button class="clear" aria-label="Clear recent"><svg class="ic"><use href="#x"/></svg></button>
          </div>
        </aside>
        <div class="browser">
          <div class="bar">
            <div class="navs"><button aria-label="Back"><svg class="ic"><use href="#back"/></svg></button><button aria-label="Forward"><svg class="ic"><use href="#fwd"/></svg></button><button aria-label="Parent"><svg class="ic"><use href="#up"/></svg></button><button aria-label="Refresh"><svg class="ic"><use href="#refresh"/></svg></button></div>
            <button class="mk" aria-label="New folder"><svg class="ic"><use href="#newfolder"/></svg></button>
            <input class="path" type="text" value="/Users/davemclaughlin/On...oject/QGIS/for screenshots/" aria-label="Path">
            <label class="find"><svg class="ic"><use href="#search"/></svg><input type="text" aria-label="Search"></label>
            <button class="drop" aria-label="Display mode"><svg class="ic"><use href="#list"/></svg><svg class="chev big"><use href="#down"/></svg></button>
            <button class="drop" aria-label="Filter"><svg class="ic"><use href="#filter"/></svg><svg class="chev big"><use href="#down"/></svg></button>
            <button class="gear" aria-label="Options"><svg class="ic"><use href="#gear"/></svg></button>
          </div>
          <div class="split">
            <div class="files">
              <table><thead><tr><th class="c-name"><span>Name<svg class="ic16 sort"><use href="#tri-d"/></svg></span></th><th class="c-date"><span>Date Modified</span></th><th><span>Size</span></th></tr></thead></table>
              <div class="rows"><i class="vscroll"></i></div>
            </div>
            <form class="opts">
              <fieldset>
                <label class="check"><input type="checkbox">Selection Only</label>
                <label class="check gap"><input type="checkbox">Animation</label>
                <label class="check"><input type="checkbox">Hair</label>
                <label class="check"><input type="checkbox" checked>UV Maps</label>
                <label class="check"><input type="checkbox" checked>Normals</label>
                <label class="check"><input type="checkbox" checked>Materials</label>
                <div class="use"><label for="us">Use Settings ...</label><span class="pick"><select id="us"><option>Render</option></select><svg class="chev"><use href="#down"/></svg></span></div>
              </fieldset>
              <fieldset>
                <p>Experimental</p>
                <label class="check gap"><input type="checkbox">Instancing</label>
              </fieldset>
            </form>
          </div>
          <div class="foot">
            <div class="fname"><input type="text" value="vic-peak.usdc" aria-label="File name"><button aria-label="Increment"><svg class="ic28"><use href="#plus"/></svg></button><button aria-label="Decrement"><svg class="ic28"><use href="#minus"/></svg></button></div>
            <button class="act">Cancel</button><button class="act primary">Export USD</button>
          </div>
        </div>
      </div>
      <button class="flap foot-flap" aria-label="Toggle region"><svg class="ic16 turn"><use href="#left"/></svg></button>
    </section>
  </div>
</main>
<script src="floor.js"></script>
</body>
</html>
```
FILE: floor.js
```js
// Draws the perspective floor grid and the two ground axes of the 3D view.
const canvas = document.getElementById('floor');

function drawFloor() {
  const W = canvas.clientWidth, H = canvas.clientHeight;
  canvas.width = W;
  canvas.height = H;
  const g = canvas.getContext('2d');
  const k = W / 2989;

  // World origin, vanishing points of both axes, and depth change per grid unit.
  const O = [1528.5 * k, 737.6 * k];
  const VX = [211 * k, -123.5 * k];
  const VY = [5486 * k, -123.5 * k];
  const ax = -0.01335, by = 0.00758;

  const at = (x, y) => {
    const w = 1 + ax * x + by * y;
    return [(O[0] + ax * x * VX[0] + by * y * VY[0]) / w, (O[1] + ax * x * VX[1] + by * y * VY[1]) / w];
  };
  const alongY = x => {
    const start = (0.08 - 1 - ax * x) / by;
    return [at(x, Math.max(start, -20000)), at(x, start + 40000)];
  };
  const alongX = y => {
    const end = (0.08 - 1 - by * y) / ax;
    return [at(end, y), at(end - 40000, y)];
  };
  const line = ([a, b]) => { g.moveTo(a[0], a[1]); g.lineTo(b[0], b[1]); };

  const family = (step, count, skip, width, stops) => {
    const paint = g.createLinearGradient(0, 0, 0, H);
    stops.forEach(([p, a]) => paint.addColorStop(p, `rgba(110,110,110,${a})`));
    g.strokeStyle = paint;
    g.lineWidth = width;
    for (let i = -count; i <= count; i++) {
      if (i === 0 || i % skip === 0) continue;
      g.beginPath(); line(alongY(i * step)); g.stroke();
      g.beginPath(); line(alongX(i * step)); g.stroke();
    }
  };

  g.fillStyle = '#3b3b3b';
  g.fillRect(0, 0, W, H);
  family(1, 400, 10, 2.5, [[0, 0], [0.14, 0], [0.3, 0.1], [0.5, 0.26], [1, 0.36]]);
  family(10, 200, 10, 2.5, [[0, 0.01], [0.1, 0.08], [0.25, 0.2], [0.5, 0.34], [1, 0.46]]);
  family(100, 20, 1000, 2.5, [[0, 0.03], [0.2, 0.22], [1, 0.46]]);

  const axis = (pts, rgb) => {
    const paint = g.createLinearGradient(0, 0, 0, H);
    paint.addColorStop(0, `rgba(${rgb},0.35)`);
    paint.addColorStop(0.25, `rgba(${rgb},0.8)`);
    paint.addColorStop(1, `rgba(${rgb},1)`);
    g.strokeStyle = paint;
    g.lineWidth = 4;
    g.beginPath(); line(pts); g.stroke();
  };
  axis(alongX(0), '180,56,76');
  axis(alongY(0), '86,130,28');
}

drawFloor();
window.addEventListener('resize', drawFloor);
```
FILE: styles.css
```css
* { box-sizing: border-box; }
html, body { height: 100%; }
body { margin: 0; padding: 76px 112px 148px; background: #fff; color: #e6e6e6; font: 21px/28px "DejaVu Sans", sans-serif; overflow: hidden; }
button, input, select { font: inherit; color: inherit; margin: 0; padding: 0; border: 0; border-radius: 0; background: none; min-width: 0; outline: 0; }
button { display: flex; align-items: center; justify-content: center; }
select { appearance: none; }
h1, h2, h3, p, ul, fieldset { margin: 0; padding: 0; border: 0; font-size: inherit; font-weight: 400; list-style: none; min-width: 0; }
a { color: inherit; text-decoration: none; }
i { display: block; }
svg { display: block; flex: none; }
.defs { position: absolute; width: 0; height: 0; }

.ic { width: 32px; height: 32px; }
.ic16 { width: 16px; height: 16px; }
.ic28 { width: 28px; height: 28px; }
.ic36 { width: 36px; height: 36px; }
.ic46 { width: 46px; height: 46px; }
.ic48 { width: 48px; height: 48px; }
.chev { width: 16px; height: 16px; }
.chev.big { width: 20px; height: 20px; }
.flip { transform: scaleX(-1); }
.turn { transform: rotate(90deg); }
.grip { width: 22px; height: 12px; margin-left: auto; }

/* window frame */
.window { position: relative; display: flex; flex-direction: column; height: 100%; min-height: 1200px; border-radius: 10px; background: #1f1f1f; box-shadow: 0 0 2px 1px rgba(0,0,0,.35), 0 40px 80px rgba(0,0,0,.5); }
.titlebar { position: relative; display: flex; align-items: center; justify-content: center; height: 44px; padding-top: 3px; border-radius: 10px 10px 0 0; background: #f6f6f6; border-bottom: 2px solid #d6d6d6; }
.lights { position: absolute; left: 16px; top: 10px; display: flex; gap: 16px; }
.lights i { width: 24px; height: 24px; border-radius: 50%; background: #dcdcdc; border: 1px solid #cfcfcf; }
.lights .close { background: #ff5f57; border-color: #e2463f; }
.lights .idle { background: #d0d0d0; border-color: #b8b8b8; }
.lights .zoom { background: #28cd41; border-color: #1fae35; }
.title { display: flex; align-items: center; gap: 12px; font: 26px/32px Inter, sans-serif; color: #b4b4b4; }
.doc { width: 24px; height: 32px; }

/* top bar */
.topbar { display: flex; height: 55px; padding: 0 18px; background: #232323; }
.logo { width: 36px; height: 55px; }
.menus { flex: none; display: flex; height: 52px; margin-left: 2px; width: 467px; }
.menus button { padding: 0 15px; }
.tabs { display: flex; gap: 4px; align-items: flex-end; height: 49px; }
.tabs button { height: 37px; padding: 0 18px; border-radius: 8px 8px 0 0; background: #2b2b2b; color: #989898; }
.tabs .on { background: #424242; color: #fff; }
.tabs .add { padding: 0 2px; }
.idblock { display: flex; height: 40px; margin-top: 6px; border: 2px solid #3d3d3d; border-radius: 8px; background: #2b2b2b; overflow: hidden; }
.idblock.scene { margin-left: auto; width: 382px; }
.idblock.layer { margin-left: 12px; width: 382px; }
.idblock .dd { width: 60px; gap: 6px; border-right: 2px solid #3d3d3d; }
.idblock input { flex: 1; padding-left: 15px; background: #1d1d1d; }
.idblock .lit { width: 39px; background: #595959; }
.idblock .off { width: 39px; color: #6c6c6c; background: #2e2e2e; }

/* editor areas */
.workspace { flex: 1; display: flex; gap: 7px; min-height: 0; padding: 0 2px; }
.left-col { flex: 1; min-width: 0; display: flex; flex-direction: column; gap: 7px; }
.right-col { width: 616px; display: grid; grid-template-rows: 571fr 1217fr; gap: 7px; }
.area { border-radius: 12px; overflow: hidden; min-height: 0; position: relative; }
.dark { background: #2b2b2b; border-radius: 8px; height: 36px; }
.dd { width: 60px; gap: 5px; }
.label { justify-content: flex-start; gap: 12px; padding: 0 5px 0 6px; }
.label .chev { margin-left: auto; }
.textdrop { justify-content: space-between; padding: 0 5px 0 14px; }
.group { display: flex; gap: 2px; border-radius: 8px; overflow: hidden; }
.group > button { width: 36px; height: 36px; background: #595959; border-radius: 0; color: #c8c8c8; }
.group > .blue { background: #4772b3; color: #fff; }
.group > .dark { background: #2b2b2b; color: #e6e6e6; }
.group > .dd { width: 62px; }
.group > .dim { color: #929292; }
.group > .faded { background: #383838; color: #8c8c8c; }
.faded .chev { opacity: .4; }

.view3d { flex: 1; display: flex; flex-direction: column; }
.toolhead { display: flex; align-items: center; height: 50px; padding: 0 17px; background: #424242; }
.side { flex: 1; display: flex; align-items: center; }
.side.end { justify-content: flex-end; }
.tweak { width: 46px; height: 46px; margin: 0 29px 0 25px; }
.mid { display: flex; gap: 13px; margin-right: 44px; }
.wide { width: 156px; }
.options { width: 127px; }
.viewport { position: relative; flex: 1; display: flex; flex-direction: column; min-height: 0; }
.viewport canvas { position: absolute; inset: 0; width: 100%; height: 100%; }
.viewhead, .viewbody { position: relative; display: flex; }
.viewhead { padding: 8px 17px 0; }
.mode { width: 216px; }
.vmenus { display: flex; gap: 4px; margin-left: 14px; }
.vmenus button { height: 36px; padding: 0 13px; border-radius: 6px; background: rgba(44,44,44,.75); }
.vright { display: flex; gap: 14px; margin-left: auto; }
.vright .group > .dark { width: 38px; }
.viewbody { padding: 25px 17px 0 16px; }
.tools { display: flex; flex-direction: column; gap: 12px; }
.toolgroup { display: flex; flex-direction: column; gap: 2px; border-radius: 8px; overflow: hidden; }
.toolgroup button { position: relative; width: 82px; height: 68px; padding-right: 9px; background: #2f2f2f; }
.toolgroup .on { background: #4780c8; }
.toolgroup .more::after { content: ""; position: absolute; right: 4px; bottom: 4px; border: 4px solid; border-color: transparent #777 #777 transparent; }
.info { margin: -2px 0 0 37px; line-height: 36px; color: #fff; text-shadow: 0 2px 3px #000; }
.nav { display: flex; flex-direction: column; align-items: flex-end; gap: 5px; margin-left: auto; }
.axes { width: 140px; height: 155px; margin: 5px 12px 0 0; }
.axis-name { font: 22px "DejaVu Sans", sans-serif; text-anchor: middle; fill: #111; }
.nav button { width: 56px; height: 56px; border-radius: 50%; background: rgba(40,40,40,.8); color: #e0e0e0; }
.flap { position: absolute; background: #303030; color: #888; }
.view-flap { right: 0; top: 81px; width: 15px; height: 28px; border-radius: 6px 0 0 6px; }

/* timeline */
.timeline { height: 134px; background: #2b2b2b; display: flex; flex-direction: column; }
.timehead { display: flex; align-items: center; height: 50px; padding: 0 38px 0 17px; background: #383838; }
.outlined { margin-left: 13px; }
.outlined > .keying { width: 119px; }
.outlined > .playback { width: 141px; }
.tv { margin-left: 17px; }
.tm { margin-left: 31px; }
.transport { display: flex; gap: 14px; margin: 0 auto; padding-left: 16px; }
.rec { width: 16px; height: 16px; border-radius: 50%; background: #dcdcdc; }
.keys > button { width: 37px; color: #e6e6e6; }
.frame { width: 147px; height: 36px; border-radius: 8px; background: #595959; text-align: center; }
.range { display: flex; gap: 2px; height: 36px; margin-left: 13px; border-radius: 8px; overflow: hidden; }
.range > * { background: #595959; }
.range button { width: 36px; }
.range label { display: flex; align-items: center; justify-content: space-between; padding: 0 27px 0 32px; }
.range input { width: 60px; text-align: right; }
.start { width: 179px; }
.stop { width: 170px; }
.ruler, .track { display: flex; padding: 0 54px 0 153px; }
.ruler { height: 46px; color: #a0a0a0; line-height: 46px; }
.ruler span, .track i { flex: 1; text-align: center; }
.track { flex: 1; background: linear-gradient(90deg, #303030 110px, #424242 110px calc(100% - 110px), #303030 calc(100% - 110px)); }
.track i { border-left: 2px solid #383838; background: linear-gradient(#262626, #262626) center / 2px 100% no-repeat; }
.playhead { position: absolute; left: 86px; top: 56px; width: 48px; height: 34px; border-radius: 8px; background: #4780c8; color: #fff; text-align: center; line-height: 34px; }
.playhead::after { content: ""; position: absolute; left: 22px; top: 34px; width: 4px; height: 44px; background: #4780c8; }
.hscroll { position: absolute; left: 16px; right: 16px; bottom: 4px; height: 18px; border-radius: 9px; background: #676767; border: 1px solid #505050; display: flex; justify-content: space-between; }
.hscroll i { width: 14px; height: 14px; margin: 1px; border-radius: 50%; background: #444; border: 2px solid #777; }
.tl-flap { left: 0; bottom: 27px; width: 14px; height: 28px; }
.tr-flap { right: 0; bottom: 27px; width: 14px; height: 28px; }

/* outliner */
.outliner { background: #282828; display: flex; flex-direction: column; }
.outhead { display: flex; align-items: center; height: 50px; padding: 0 16px; background: #3a3a3a; }
.outhead .dd, .prophead .dd { width: 62px; height: 38px; border: 2px solid #454545; }
.outhead .dd + .dd { margin-left: 12px; }
.find { display: flex; align-items: center; background: #1d1d1d; border-radius: 8px; }
.find input { flex: 1; }
.outhead .find { width: 230px; height: 36px; margin: 0 72px 0 35px; padding-left: 6px; border: 1px solid #444; }
.newcol { width: 36px; height: 36px; margin-left: 12px; border-radius: 8px; background: #595959; }
.tree { position: relative; flex: 1; margin-top: 1px; background: repeating-linear-gradient(#282828 0 40px, #2c2c2c 40px 80px); color: #c8c8c8; }
.tree li { display: flex; align-items: center; height: 40px; padding: 0 14px 0 38px; }
.tree .child { padding-left: 78px; }
.tree .sel { background: #335690; }
.sel .name { color: #ffa500; }
.cell { width: 40px; height: 36px; display: flex; align-items: center; justify-content: center; }
.arrow { position: relative; z-index: 1; }
.boxed { border: 2px solid #585858; border-radius: 8px; background: #3c3c3c; }
.sel .boxed { background: #5a7299; border-color: #7088b4; }
.name { margin: 0 41px 0 9px; padding-top: 3px; }
.eye { margin-left: auto; color: #e0e0e0; }
.orange { color: #d68246; }
.green { color: #0bb88c; }
.sky { color: #649be0; }
.red { color: #d85f6c; }
.vis { appearance: none; position: relative; z-index: 1; width: 20px; height: 20px; border-radius: 2px; background: #e0e0e0; }
.vis::before { content: ""; position: absolute; left: 7px; top: 2px; width: 5px; height: 10px; border: solid #282828; border-width: 0 3px 3px 0; transform: rotate(42deg); }
.branches { position: absolute; left: 0; top: 0; width: 160px; height: 205px; pointer-events: none; }

/* properties */
.props { display: flex; flex-direction: column; background: #424242; }
.prophead { display: flex; align-items: center; height: 50px; padding: 0 18px 0 16px; background: #383838; }
.objic { margin: 0 17px 0 27px; }
.pin { margin-left: auto; color: #888; }
.propbody { flex: 1; display: flex; min-height: 0; }
.ptabs { display: flex; flex-direction: column; gap: 4px; width: 56px; padding: 18px 0 0 4px; background: #212121; color: #c0c0c0; }
.ptabs button { height: 52px; border-radius: 8px 0 0 8px; background: #2c2c2c; }
.ptabs .sep { margin-top: 16px; }
.ptabs .on { background: #424242; color: #ff9c4f; }
.panels { flex: 1; min-width: 0; }
.idname { display: flex; height: 36px; margin: 18px 16px 18px 18px; border-radius: 8px; overflow: hidden; background: #2b2b2b; }
.idname .dd { width: 61px; }
.idname input { flex: 1; padding-left: 14px; margin-left: 2px; background: #1d1d1d; }
.panel { display: flex; align-items: center; height: 48px; padding: 0 15px 0 16px; font-size: 23px; color: #d0d0d0; text-shadow: 0 2px 3px rgba(0,0,0,.5); }
.panel > .ic16 { margin-right: 12px; color: #a8a8a8; }
.transform { background: #383838; padding: 17px 0 4px; }
.block { display: grid; grid-template-columns: 1fr 252px 40px 42px; grid-auto-rows: 38px; row-gap: 2px; align-items: center; justify-items: center; padding-right: 13px; margin-bottom: 12px; }
.block label { justify-self: end; margin-right: 18px; }
.block > input { width: 100%; height: 38px; background: #595959; text-align: center; }
.block > input:first-of-type { border-radius: 8px 0 0 0; }
.block > input:last-of-type { border-radius: 0 0 0 8px; }
.lk { color: #8c8c8c; }
.dot { width: 8px; height: 8px; border-radius: 50%; background: #d0d0d0; }
.pick { position: relative; display: block; width: 100%; }
.pick select { display: block; width: 100%; height: 38px; padding-left: 12px; border-radius: 8px; background: #2b2b2b; border: 2px solid #404040; color: #d8d8d8; }
.pick .chev { position: absolute; right: 5px; top: 11px; pointer-events: none; color: #fff; }
.delta { display: flex; align-items: center; height: 40px; margin-top: 22px; padding-left: 44px; gap: 13px; color: #d0d0d0; }
.delta .ic16 { color: #a8a8a8; }
.check { display: flex; align-items: center; gap: 7px; }
.check input { appearance: none; position: relative; width: 24px; height: 24px; border-radius: 4px; background: #666; }
.check input:checked { background: #4772b3; }
.check input:checked::before { content: ""; position: absolute; left: 9px; top: 3px; width: 6px; height: 13px; border: solid #fff; border-width: 0 3px 3px 0; transform: rotate(42deg); }
.muted input:checked { background: #465f84; }
.muted input:checked::before { border-color: #8c8c8c; }

/* status bar */
.status { display: flex; align-items: center; height: 36px; margin-top: 6px; padding: 0 34px 2px 18px; background: #303030; border-radius: 0 0 10px 10px; color: #a6a6a6; }
.hint { display: flex; align-items: center; gap: 17px; }
.hint.h1 { width: 138px; }
.hint.h2 { width: 402px; }
.hint.h3 { width: 539px; }
.version { margin-left: auto; }

/* file dialog */
.modal { position: absolute; inset: 0; display: grid; place-items: center; padding-bottom: 2px; }
.dialog { position: relative; display: flex; flex-direction: column; width: 1924px; max-width: 100%; height: 1034px; border-radius: 12px; overflow: hidden; background: #424242; box-shadow: 0 0 2px 1px rgba(0,0,0,.5), 0 44px 80px rgba(0,0,0,.55); }
.dlg-title { position: relative; display: flex; align-items: center; justify-content: center; height: 43px; padding-top: 3px; flex: none; background: linear-gradient(#e8e8e8, #cdcdcd); border-bottom: 2px solid #b5b5b5; }
.dlg-title .title { color: #484848; }
.dlg-main { flex: 1; display: flex; min-height: 0; }
.places { width: 481px; overflow: hidden; background: #424242; }
.phead { display: flex; align-items: center; height: 49px; padding: 0 17px 0 16px; background: #4a4a4a; color: #fff; font-size: 23px; text-shadow: 0 2px 3px rgba(0,0,0,.5); }
.phead > .ic16 { margin-right: 12px; color: #c0c0c0; }
.pbox { display: flex; flex-direction: column; gap: 4px; margin: 18px 18px 17px; padding: 10px 10px 8px; border-radius: 8px; background: #333; }
.pbox a { display: flex; align-items: center; gap: 16px; height: 36px; padding-left: 2px; border-radius: 6px; white-space: nowrap; }
.pbox .on { background: #68707c; color: #fff; }
.more-row { display: flex; align-items: center; height: 18px; padding-left: 10px; color: #b0b0b0; }
.grip.soft { margin: 0 auto; }
.bookmark { display: flex; width: 445px; height: 36px; margin: 18px 18px 17px; padding-left: 7px; border-radius: 8px; background: #595959; }
.bookmark span { flex: 1; }
.recent { display: flex; align-items: flex-start; }
.recent .pbox { width: 389px; margin-right: 20px; padding-bottom: 40px; }
.clear { width: 36px; height: 36px; margin-top: 18px; border-radius: 8px; background: #595959; }
.browser { flex: 1; display: flex; flex-direction: column; min-width: 0; background: #4a4a4a; }
.bar { display: flex; align-items: center; height: 86px; padding: 0 18px 0 17px; }
.navs { display: flex; gap: 2px; padding: 2px; border-radius: 9px; background: #393939; }
.navs button { width: 49px; height: 46px; background: #595959; }
.navs button:first-child { border-radius: 8px 0 0 8px; }
.navs button:last-child { border-radius: 0 8px 8px 0; }
.mk { width: 50px; height: 48px; margin: 0 19px 0 18px; border-radius: 8px; background: #595959; border: 2px solid #393939; }
.path { flex: 1; height: 48px; padding: 0 14px; border-radius: 8px; background: #1d1d1d; }
.bar .find { width: 223px; height: 48px; margin-left: 20px; padding-left: 6px; }
.drop { width: 76px; height: 48px; gap: 10px; margin-left: 20px; border-radius: 8px; background: #2b2b2b; }
.gear { width: 48px; height: 48px; margin-left: 20px; border-radius: 8px; background: #4780c8; }
.split { flex: 1; display: flex; min-height: 0; }
.files { flex: 1; display: flex; flex-direction: column; }
.files table { width: 100%; height: 46px; border-collapse: collapse; table-layout: fixed; background: #3f3f3f; border-bottom: 2px solid #303030; }
.files th { padding: 5px 0 0; text-align: left; font-weight: 400; }
.files th span { display: flex; align-items: center; justify-content: space-between; height: 28px; padding-left: 20px; padding-right: 13px; }
.files .c-name span, .files .c-date span { border-right: 1px solid #2b2b2b; }
.c-name { width: 523px; }
.c-date { width: 256px; }
.sort { color: #b0b0b0; }
.rows { position: relative; flex: 1; border-top: 46px solid #333; background: repeating-linear-gradient(#2c2c2c 0 41px, #333 41px 82px); }
.vscroll { position: absolute; right: 5px; top: -27px; bottom: 17px; width: 12px; border-radius: 6px; background: #4c4c4c; }
.opts { width: 481px; padding: 17px 18px; }
.opts fieldset { padding: 9px 10px 10px 181px; margin-bottom: 12px; border-radius: 8px; background: #3c3c3c; }
.opts .check { height: 40px; }
.opts .gap { margin-top: 16px; }
.opts p { height: 40px; line-height: 40px; margin-left: -165px; }
.use { display: flex; align-items: center; margin: 17px 0 0 -172px; }
.use label { width: 172px; white-space: nowrap; }
.use .pick { width: 215px; }
.foot { display: flex; align-items: center; height: 85px; padding: 0 17px 2px 18px; background: #424242; }
.fname { flex: 1; display: flex; align-items: center; height: 48px; padding: 0 9px 0 15px; border-radius: 8px; background: #1d1d1d; }
.fname input { flex: 1; }
.fname button { width: 43px; height: 48px; }
.act { width: 254px; height: 48px; margin-left: 19px; border-radius: 8px; background: #595959; }
.primary { background: #4780c8; color: #fff; }
.foot-flap { right: 29px; bottom: 0; width: 28px; height: 14px; border-radius: 6px 6px 0 0; }
```
